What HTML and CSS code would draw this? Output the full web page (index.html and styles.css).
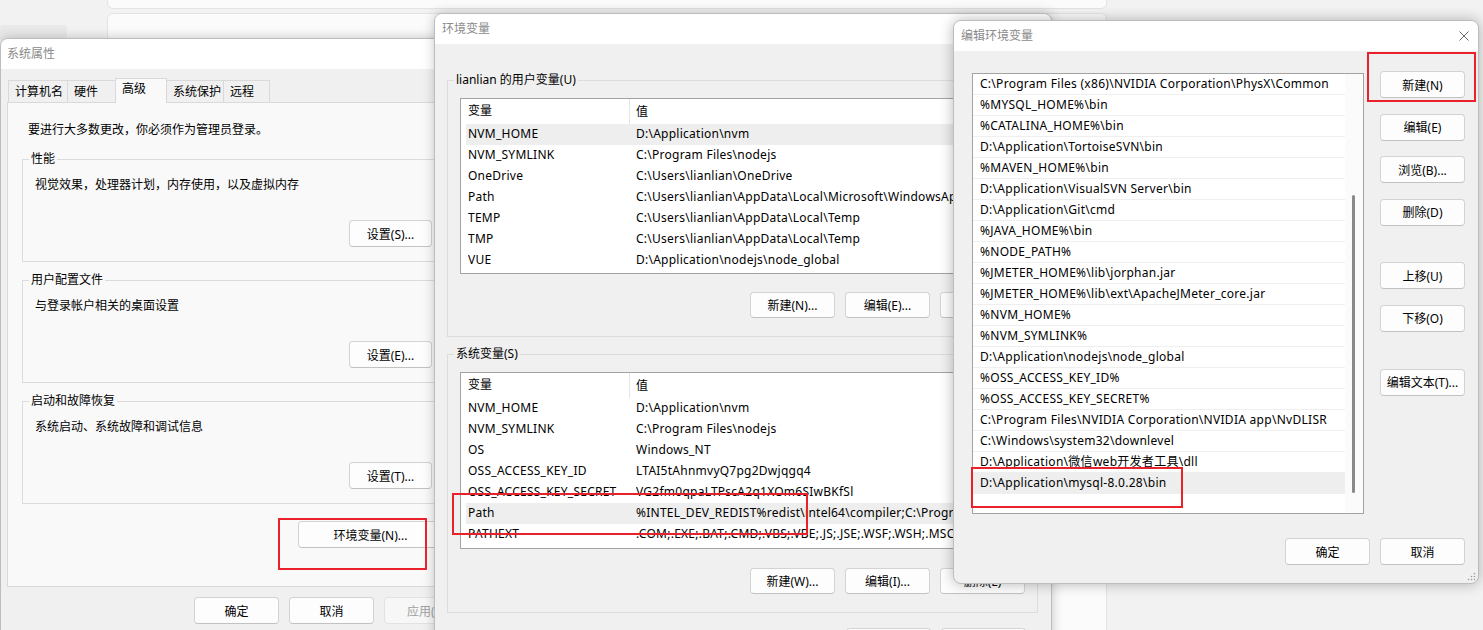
FILE: index.html
```html
<!DOCTYPE html>
<html lang="zh-CN">
<head>
    <meta charset="UTF-8">
    <title>编辑环境变量</title>
    <link rel="stylesheet" href="styles.css">
</head>
<body>
    <div class="bg-card bg-card-top"></div>
    <div class="bg-card bg-card-main"></div>
    <div class="bg-side"></div>

    <!-- 系统属性 -->
    <div class="window win-sysprop">
        <div class="titlebar"><span class="title">系统属性</span></div>
        <div class="win-body">
            <div class="tabs">
                <div class="tab" style="width: 60px">计算机名</div>
                <div class="tab" style="width: 49px">硬件</div>
                <div class="tab active" style="width: 52px">高级</div>
                <div class="tab" style="width: 58px">系统保护</div>
                <div class="tab" style="width: 47px">远程</div>
            </div>
            <div class="tab-panel">
                <p class="notice">要进行大多数更改，你必须作为管理员登录。</p>

                <fieldset class="group">
                    <legend>性能</legend>
                    <div class="group-desc">视觉效果，处理器计划，内存使用，以及虚拟内存</div>
                    <div class="group-actions"><button class="btn">设置(S)...</button></div>
                </fieldset>

                <fieldset class="group">
                    <legend>用户配置文件</legend>
                    <div class="group-desc">与登录帐户相关的桌面设置</div>
                    <div class="group-actions"><button class="btn">设置(E)...</button></div>
                </fieldset>

                <fieldset class="group">
                    <legend>启动和故障恢复</legend>
                    <div class="group-desc">系统启动、系统故障和调试信息</div>
                    <div class="group-actions"><button class="btn">设置(T)...</button></div>
                </fieldset>

                <div class="env-row"><button class="btn btn-env">环境变量(N)...</button></div>
            </div>
            <div class="dialog-buttons">
                <button class="btn">确定</button>
                <button class="btn">取消</button>
                <button class="btn disabled">应用(A)</button>
            </div>
        </div>
    </div>

    <!-- 环境变量 -->
    <div class="window win-envvars">
        <div class="titlebar"><span class="title">环境变量</span></div>
        <div class="win-body">
            <fieldset class="group wide">
                <legend>lianlian 的用户变量(U)</legend>
                <div class="var-list user-list">
                    <div class="var-head"><span class="col-name">变量</span><span class="col-value">值</span></div>
                    <div class="var-row selected"><span>NVM_HOME</span><span>D:\Application\nvm</span></div>
                    <div class="var-row"><span>NVM_SYMLINK</span><span>C:\Program Files\nodejs</span></div>
                    <div class="var-row"><span>OneDrive</span><span>C:\Users\lianlian\OneDrive</span></div>
                    <div class="var-row"><span>Path</span><span>C:\Users\lianlian\AppData\Local\Microsoft\WindowsApps;C:\Users\lianlian\AppData\Local\Programs</span></div>
                    <div class="var-row"><span>TEMP</span><span>C:\Users\lianlian\AppData\Local\Temp</span></div>
                    <div class="var-row"><span>TMP</span><span>C:\Users\lianlian\AppData\Local\Temp</span></div>
                    <div class="var-row"><span>VUE</span><span>D:\Application\nodejs\node_global</span></div>
                </div>
                <div class="list-actions">
                    <button class="btn">新建(N)...</button>
                    <button class="btn">编辑(E)...</button>
                    <button class="btn">删除(D)</button>
                </div>
            </fieldset>

            <fieldset class="group wide">
                <legend>系统变量(S)</legend>
                <div class="var-list sys-list">
                    <div class="var-head"><span class="col-name">变量</span><span class="col-value">值</span></div>
                    <div class="var-row"><span>NVM_HOME</span><span>D:\Application\nvm</span></div>
                    <div class="var-row"><span>NVM_SYMLINK</span><span>C:\Program Files\nodejs</span></div>
                    <div class="var-row"><span>OS</span><span>Windows_NT</span></div>
                    <div class="var-row"><span>OSS_ACCESS_KEY_ID</span><span>LTAI5tAhnmvyQ7pg2Dwjqgq4</span></div>
                    <div class="var-row"><span>OSS_ACCESS_KEY_SECRET</span><span>VG2fm0qpaLTPscA2q1XOm6SIwBKfSl</span></div>
                    <div class="var-row selected"><span>Path</span><span>%INTEL_DEV_REDIST%redist\intel64\compiler;C:\Program Files (x86)\Common Files</span></div>
                    <div class="var-row"><span>PATHEXT</span><span>.COM;.EXE;.BAT;.CMD;.VBS;.VBE;.JS;.JSE;.WSF;.WSH;.MSC</span></div>
                </div>
                <div class="list-actions">
                    <button class="btn">新建(W)...</button>
                    <button class="btn">编辑(I)...</button>
                    <button class="btn">删除(L)</button>
                </div>
            </fieldset>

            <div class="dialog-buttons env-buttons">
                <button class="btn">确定</button>
                <button class="btn">取消</button>
            </div>
        </div>
    </div>

    <!-- 编辑环境变量 -->
    <div class="window win-edit">
        <div class="titlebar">
            <span class="title">编辑环境变量</span>
            <svg class="close-icon" width="10" height="10" viewBox="0 0 10 10">
                <path d="M0.5 0.5 L9.5 9.5 M9.5 0.5 L0.5 9.5" stroke="#6b6b6b" stroke-width="1" fill="none"/>
            </svg>
        </div>
        <div class="edit-body">
            <div class="path-list">
                <div class="path-rows">
                    <div class="path-row">C:\Program Files (x86)\NVIDIA Corporation\PhysX\Common</div>
                    <div class="path-row">%MYSQL_HOME%\bin</div>
                    <div class="path-row">%CATALINA_HOME%\bin</div>
                    <div class="path-row">D:\Application\TortoiseSVN\bin</div>
                    <div class="path-row">%MAVEN_HOME%\bin</div>
                    <div class="path-row">D:\Application\VisualSVN Server\bin</div>
                    <div class="path-row">D:\Application\Git\cmd</div>
                    <div class="path-row">%JAVA_HOME%\bin</div>
                    <div class="path-row">%NODE_PATH%</div>
                    <div class="path-row">%JMETER_HOME%\lib\jorphan.jar</div>
                    <div class="path-row">%JMETER_HOME%\lib\ext\ApacheJMeter_core.jar</div>
                    <div class="path-row">%NVM_HOME%</div>
                    <div class="path-row">%NVM_SYMLINK%</div>
                    <div class="path-row">D:\Application\nodejs\node_global</div>
                    <div class="path-row">%OSS_ACCESS_KEY_ID%</div>
                    <div class="path-row">%OSS_ACCESS_KEY_SECRET%</div>
                    <div class="path-row">C:\Program Files\NVIDIA Corporation\NVIDIA app\NvDLISR</div>
                    <div class="path-row">C:\Windows\system32\downlevel</div>
                    <div class="path-row">D:\Application\微信web开发者工具\dll</div>
                    <div class="path-row selected">D:\Application\mysql-8.0.28\bin</div>
                </div>
                <div class="scroll-track"><div class="scroll-thumb"></div></div>
            </div>
            <div class="side-buttons">
                <button class="btn">新建(N)</button>
                <button class="btn">编辑(E)</button>
                <button class="btn">浏览(B)...</button>
                <button class="btn">删除(D)</button>
                <button class="btn spaced">上移(U)</button>
                <button class="btn">下移(O)</button>
                <button class="btn spaced">编辑文本(T)...</button>
            </div>
            <div class="dialog-buttons edit-buttons">
                <button class="btn">确定</button>
                <button class="btn">取消</button>
            </div>
        </div>
        <svg class="grip" width="9" height="9" viewBox="0 0 9 9">
            <circle cx="7.5" cy="1.5" r="0.8" fill="#9a9a9a"/>
            <circle cx="7.5" cy="4.5" r="0.8" fill="#9a9a9a"/>
            <circle cx="4.5" cy="4.5" r="0.8" fill="#9a9a9a"/>
            <circle cx="7.5" cy="7.5" r="0.8" fill="#9a9a9a"/>
            <circle cx="4.5" cy="7.5" r="0.8" fill="#9a9a9a"/>
            <circle cx="1.5" cy="7.5" r="0.8" fill="#9a9a9a"/>
        </svg>
    </div>

    <!-- red annotation boxes -->
    <div class="mark mark-env"></div>
    <div class="mark mark-path"></div>
    <div class="mark mark-new"></div>
    <div class="mark mark-mysql"></div>
</body>
</html>
```

FILE: styles.css
```css
* {
    box-sizing: border-box;
}

body {
    margin: 0;
    width: 1483px;
    height: 630px;
    overflow: hidden;
    position: relative;
    background: #f2f2f2;
    font-family: "Noto Sans", "Noto Sans CJK SC", sans-serif;
    font-size: 12px;
    line-height: 16px;
    color: #000;
}

/* desktop behind the dialogs */
.bg-card {
    position: absolute;
    left: 107px;
    width: 1000px;
    background: #fbfbfb;
    border: 1px solid #e3e3e3;
    border-radius: 6px;
}

.bg-card-top {
    top: -12px;
    height: 21px;
}

.bg-card-main {
    top: 13px;
    height: 640px;
}

.bg-side {
    position: absolute;
    left: 0;
    top: 25px;
    width: 67px;
    height: 16px;
    background: #e9e9e9;
    border-radius: 4px;
}

/* windows */
.window {
    position: absolute;
    background: #f0f0f0;
    border: 1px solid #bdbdbd;
    border-radius: 8px;
    box-shadow: 0 0 12px rgba(0, 0, 0, 0.22);
    overflow: hidden;
}

.titlebar {
    height: 30px;
    background: #fff;
    display: flex;
    align-items: center;
    padding-left: 7px;
    color: #8a8a8a;
}

.win-sysprop {
    left: 0;
    top: 38px;
    width: 478px;
    height: 640px;
}

.win-sysprop .titlebar {
    padding-left: 6px;
}

.win-sysprop .win-body {
    padding: 10px 0 0 6px;
}

.win-envvars {
    left: 434px;
    top: 13px;
    width: 618px;
    height: 640px;
}

.win-envvars .win-body {
    padding: 28px 0 0 12px;
}

.win-edit {
    left: 953px;
    top: 20px;
    width: 526px;
    height: 564px;
    box-shadow: 0 0 14px rgba(0, 0, 0, 0.28);
}

/* tabs */
.tabs {
    display: flex;
    align-items: flex-end;
    height: 23px;
    padding-left: 1px;
}

.tab {
    height: 22px;
    margin-right: -1px;
    padding: 3px 0 0 6px;
    background: #f0f0f0;
    border: 1px solid #d9d9d9;
    border-bottom: none;
    white-space: nowrap;
}

.tab.active {
    position: relative;
    z-index: 1;
    height: 25px;
    margin-bottom: -1px;
    padding-top: 2px;
    background: #f9f9f9;
}

.tab-panel {
    width: 462px;
    height: 485px;
    background: #f9f9f9;
    border: 1px solid #d9d9d9;
    padding: 19px 0 0 14px;
}

.notice {
    margin: 0;
    padding-left: 6px;
}

/* group boxes */
.group {
    width: 421px;
    margin: 10px 0 0;
    padding: 0 10px 14px 12px;
    border: 1px solid #dcdcdc;
}

.notice + .group {
    margin-top: 13px;
}

.group legend {
    padding: 0 2px;
    margin-left: -6px;
    line-height: 16px;
}

.group-desc {
    margin-top: 10px;
}

.group-actions {
    display: flex;
    justify-content: flex-end;
    margin-top: 27px;
}

.btn {
    width: 83px;
    height: 27px;
    padding: 0;
    background: #fdfdfd;
    border: 1px solid #d3d3d3;
    border-bottom-color: #c2c2c2;
    border-radius: 4px;
    font-family: inherit;
    font-size: 12px;
    color: #000;
    white-space: nowrap;
}

.btn.disabled {
    color: #a0a0a0;
    background: #f7f7f7;
    border-color: #e2e2e2;
}

.env-row {
    width: 421px;
    display: flex;
    justify-content: flex-end;
    margin-top: 17px;
}

.btn-env {
    width: 145px;
}

.dialog-buttons {
    display: flex;
    justify-content: flex-end;
    gap: 10px;
    width: 462px;
    margin-top: 10px;
}

.dialog-buttons .btn {
    width: 85px;
}

/* environment variable lists */
.group.wide {
    width: 591px;
    margin-top: 0;
    padding: 0 12px 18px 12px;
}

.group.wide + .group.wide {
    margin-top: 9px;
}

.var-list {
    margin-top: 10px;
    background: #fff;
    border: 1px solid #a3a3a3;
    overflow: hidden;
}

.user-list {
    height: 176px;
}

.sys-list {
    height: 177px;
}

.var-head {
    display: flex;
    height: 25px;
    align-items: center;
}

.col-name {
    width: 169px;
    height: 100%;
    padding: 4px 0 0 7px;
    border-right: 1px solid #e5e5e5;
}

.col-value {
    padding-left: 6px;
}

.var-row {
    display: grid;
    grid-template-columns: 168px 1fr;
    height: 21px;
    margin-left: 5px;
    padding: 2px 0 0 2px;
    white-space: nowrap;
    letter-spacing: 0.25px;
}

.var-row span {
    overflow: hidden;
}

.var-row.selected,
.path-row.selected {
    background: #eeeeee;
}

.list-actions {
    display: flex;
    justify-content: flex-end;
    gap: 10px;
    margin-top: 18px;
}

.sys-list + .list-actions {
    margin-top: 19px;
}

.list-actions .btn {
    width: 85px;
    height: 26px;
}

.env-buttons {
    width: 579px;
    margin-top: 15px;
}

/* edit dialog */
.close-icon {
    margin-left: auto;
    margin-right: 9px;
}

.edit-body {
    display: grid;
    grid-template-columns: 392px 85px;
    column-gap: 16px;
    padding: 22px 0 0 18px;
}

.path-list {
    display: flex;
    height: 441px;
    background: #fff;
    border: 1px solid #a3a3a3;
}

.path-rows {
    width: 372px;
}

.path-row {
    height: 21px;
    padding: 2px 0 0 7px;
    border-bottom: 1px solid #efefef;
    white-space: nowrap;
    letter-spacing: 0.28px;
}

.scroll-track {
    flex: 1;
    padding: 121px 0 0 7px;
    background: #fbfbfb;
}

.scroll-thumb {
    width: 3px;
    height: 298px;
    background: #8a8a8a;
    border-radius: 2px;
}

.side-buttons {
    display: flex;
    flex-direction: column;
    gap: 15.6px;
    margin-top: -2px;
}

.side-buttons .btn {
    width: 85px;
}

.side-buttons .spaced {
    margin-top: 21px;
}

.edit-buttons {
    grid-column: 1 / 3;
    width: auto;
    margin-top: 24px;
}

.grip {
    position: absolute;
    right: 2px;
    bottom: 2px;
}

/* red annotations */
.mark {
    position: absolute;
    border: 2px solid #e8212b;
    z-index: 10;
}

.mark-env {
    left: 278px;
    top: 518px;
    width: 149px;
    height: 52px;
}

.mark-path {
    left: 452px;
    top: 493px;
    width: 356px;
    height: 42px;
}

.mark-new {
    left: 1367px;
    top: 52px;
    width: 109px;
    height: 50px;
}

.mark-mysql {
    left: 971px;
    top: 467px;
    width: 212px;
    height: 41px;
}
```
